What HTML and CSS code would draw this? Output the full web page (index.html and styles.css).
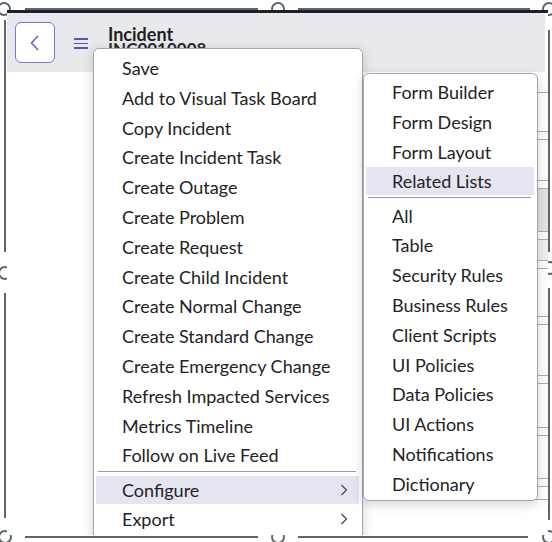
FILE: index.html
```html
<!DOCTYPE html>
<html lang="en">
<head>
  <meta charset="UTF-8">
  <title>Incident</title>
  <link rel="stylesheet" href="styles.css">
</head>
<body>
  <div class="screen">
    <!-- crop frame with its handles -->
    <svg class="frame" width="552" height="542" viewBox="0 0 552 542">
      <g stroke="#5b666e" stroke-width="2" fill="none">
        <line x1="25" y1="9" x2="258" y2="9"/>
        <line x1="298" y1="9" x2="530" y2="9"/>
        <line x1="25" y1="537" x2="258" y2="537"/>
        <line x1="298" y1="537" x2="528" y2="537"/>
        <line x1="5" y1="20" x2="5" y2="252"/>
        <line x1="5" y1="293" x2="5" y2="518"/>
        <line x1="549" y1="30" x2="549" y2="252"/>
        <line x1="549" y1="288" x2="549" y2="520"/>
      </g>
      <g stroke="#5b666e" stroke-width="2" fill="#fff">
        <circle cx="4" cy="9" r="6"/>
        <circle cx="278" cy="9" r="6"/>
        <circle cx="549" cy="9" r="6"/>
        <circle cx="5" cy="273" r="6"/>
        <circle cx="550" cy="268" r="6"/>
        <circle cx="5" cy="537" r="6"/>
        <circle cx="278" cy="537" r="6"/>
        <circle cx="549" cy="537" r="6"/>
      </g>
    </svg>

    <div class="app">
      <header class="form-header">
        <button class="back-btn">
          <svg width="10" height="16" viewBox="0 0 10 16"><polyline points="8,1 1.5,8 8,15" fill="none" stroke="#6266c6" stroke-width="1.5"/></svg>
        </button>
        <span class="hamburger"><i></i><i></i><i></i></span>
        <div class="title">
          <div class="title-main">Incident</div>
          <div class="title-sub">INC0010008</div>
        </div>
      </header>

      <div class="form-body">
        <div class="fields">
          <div class="field f40"></div>
          <div class="field f42"></div>
          <div class="field f44 readonly"></div>
          <div class="field f22 light"></div>
          <div class="field f49"></div>
          <div class="field f52"></div>
          <div class="field f45"></div>
          <div class="field f44"></div>
          <div class="field f14"></div>
        </div>
      </div>

      <ul class="menu main-menu">
        <li>Save</li>
        <li>Add to Visual Task Board</li>
        <li>Copy Incident</li>
        <li>Create Incident Task</li>
        <li>Create Outage</li>
        <li>Create Problem</li>
        <li>Create Request</li>
        <li>Create Child Incident</li>
        <li>Create Normal Change</li>
        <li>Create Standard Change</li>
        <li>Create Emergency Change</li>
        <li>Refresh Impacted Services</li>
        <li>Metrics Timeline</li>
        <li>Follow on Live Feed</li>
        <li class="sep"></li>
        <li class="active has-sub">Configure
          <svg class="chev" width="8" height="12" viewBox="0 0 8 12"><polyline points="1.5,1 6.5,6 1.5,11" fill="none" stroke="#444" stroke-width="1.2"/></svg>
        </li>
        <li class="has-sub">Export
          <svg class="chev" width="8" height="12" viewBox="0 0 8 12"><polyline points="1.5,1 6.5,6 1.5,11" fill="none" stroke="#444" stroke-width="1.2"/></svg>
        </li>
        <li>Templates</li>
      </ul>

      <ul class="menu sub-menu">
        <li>Form Builder</li>
        <li>Form Design</li>
        <li>Form Layout</li>
        <li class="active">Related Lists</li>
        <li class="sep"></li>
        <li>All</li>
        <li>Table</li>
        <li>Security Rules</li>
        <li>Business Rules</li>
        <li>Client Scripts</li>
        <li>UI Policies</li>
        <li>Data Policies</li>
        <li>UI Actions</li>
        <li>Notifications</li>
        <li>Dictionary</li>
      </ul>
    </div>
  </div>
</body>
</html>
```

FILE: styles.css
```css
* {
  margin: 0;
  padding: 0;
  box-sizing: border-box;
}

body {
  background: #fff;
  font-family: 'Lato', 'Noto Sans', sans-serif;
  color: #232323;
}

.screen {
  position: relative;
  width: 552px;
  height: 542px;
  overflow: hidden;
}

.frame {
  position: absolute;
  top: 0;
  left: 0;
  z-index: 0;
}

.app {
  position: relative;
  z-index: 1;
  margin: 10px 0 0 7px;
  width: 541px;
  height: 525px;
  background: #fff;
  border-top: 3px solid #1e2226;
  overflow: hidden;
}

.form-header {
  display: flex;
  align-items: flex-start;
  width: 538px;
  height: 59px;
  padding: 9px 8px;
  background: #e8e9ec;
}

.back-btn {
  display: flex;
  align-items: center;
  justify-content: center;
  width: 40px;
  height: 41px;
  border: 1.5px solid #7477d4;
  border-radius: 6px;
  background: #fff;
}

.hamburger {
  display: flex;
  flex-direction: column;
  gap: 3px;
  width: 14px;
  margin: 16px 20px 0 19px;
}

.hamburger i {
  display: block;
  height: 1.5px;
  background: #5558a8;
}

.title {
  padding-top: 3px;
}

.title-main {
  font-size: 18px;
  line-height: 18px;
  font-weight: bold;
  color: #1f1f1f;
}

.title-sub {
  margin-top: -3px;
  font-size: 17px;
  line-height: 18px;
  font-weight: bold;
  color: #2a2a2a;
}

.form-body {
  display: flex;
  justify-content: flex-end;
  padding-top: 20px;
}

.fields {
  display: flex;
  flex-direction: column;
  width: 18px;
}

.field {
  border: 1px solid #a9aeb4;
  border-right: none;
  margin-bottom: 7px;
}

.field.readonly { background: #e2e3e5; }
.field.light { background: #f0f0f1; }
.f14 { height: 14px; }
.f22 { height: 22px; }
.f40 { height: 40px; }
.f42 { height: 42px; }
.f44 { height: 44px; }
.f45 { height: 45px; }
.f49 { height: 49px; }
.f52 { height: 52px; }

.menu {
  position: absolute;
  list-style: none;
  background: #fff;
  border: 1px solid #a3a8ae;
  border-radius: 6px;
  box-shadow: 0 3px 12px rgba(0, 0, 0, 0.18);
}

.main-menu {
  top: 35px;
  left: 86px;
  width: 270px;
  padding: 5px 3px 0 2px;
}

.sub-menu {
  top: 60px;
  left: 356px;
  width: 175px;
  padding: 4px 3px 0 2px;
}

.menu li {
  position: relative;
  height: 28px;
  margin-bottom: 1.8px;
  padding-left: 26px;
  font-size: 18px;
  line-height: 28px;
  white-space: nowrap;
}

.menu li.active {
  background: #e5e5f2;
}

.menu li.sep {
  height: 1px;
  margin: 0 3px 3.4px 2px;
  padding: 0;
  background: #9a9a9a;
}

.chev {
  position: absolute;
  right: 11px;
  top: 8px;
}
```
